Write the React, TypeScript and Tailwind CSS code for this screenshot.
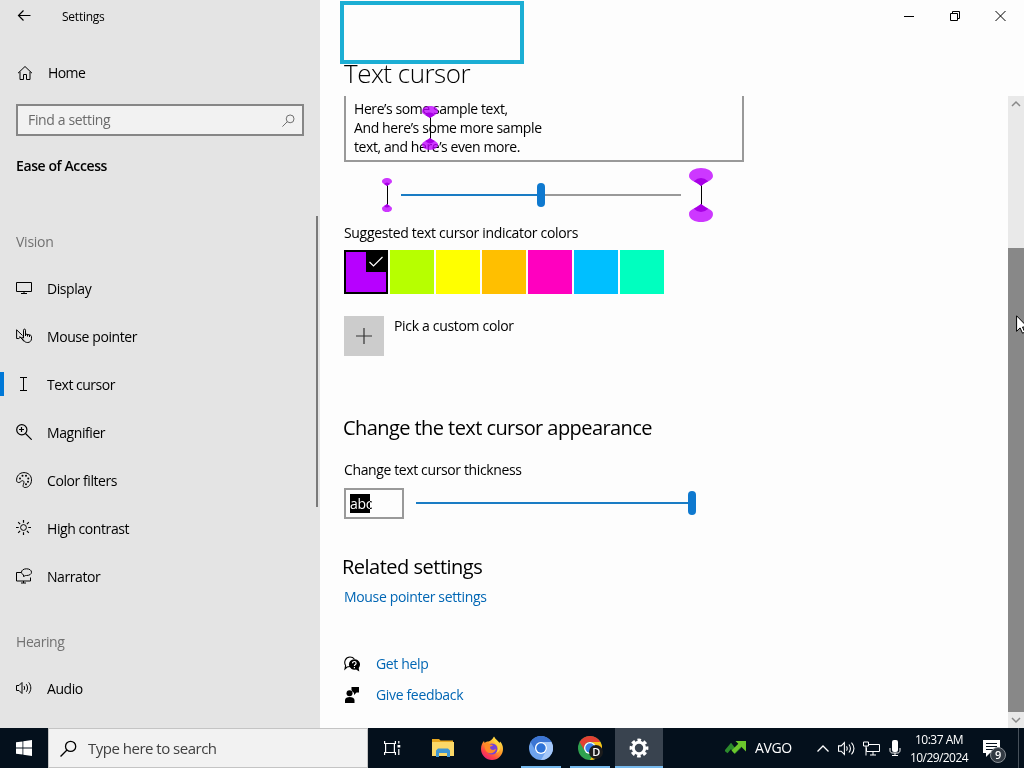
import type { ReactNode } from "react";
import clsx from "clsx";

type IconProps = { children: ReactNode; className?: string };

const LineIcon = ({ children, className }: IconProps) => (
  <svg
    viewBox="0 0 16 16"
    fill="none"
    stroke="currentColor"
    strokeWidth="1"
    className={clsx("shrink-0", className || "w-4 h-4")}
  >
    {children}
  </svg>
);

const HomeIcon = () => (
  <LineIcon>
    <path d="M1 8.2 8 1.5l7 6.7M3 6.7v7.8h3.5v-5h3v5H13V6.7" />
  </LineIcon>
);

const DisplayIcon = () => (
  <LineIcon>
    <path d="M.5 2.500h15v9H.5zM8 11.500v2M5 13.500h6" />
  </LineIcon>
);

const PointerIcon = () => (
  <LineIcon>
    <path d="M8 13.500 4.500 9 2.800 10.500H.6V1.800L6.500 7.500M3.500 8.500l4 4" />
    <path d="M7.500 10V2.200c0-1.500 2-1.500 2 0V6l4.500 1c1 .3 1.500.8 1.500 1.800v2c0 2-1.700 3.700-3.700 3.700-2 0-3-.6-4-2L5.500 10c.5-.9 1.300-.8 2 0M9.500 6v2M11.500 6.500v2M13.500 7v2" />
  </LineIcon>
);

const TextCursorIcon = () => (
  <LineIcon>
    <path d="M4 1.500h7M4 14.500h7M7.500 1.500v13" />
  </LineIcon>
);

const MagnifierIcon = () => (
  <LineIcon>
    <circle cx="5.800" cy="5.800" r="5.100" strokeWidth="1.200" />
    <path d="M9.500 9.500 15.700 15.700M3 5.500h5M5.500 3v5" strokeWidth="1.200" />
  </LineIcon>
);

const PaletteIcon = () => (
  <LineIcon>
    <path d="M.6 8.800C.3 4 3.500.6 8 .6c4.300 0 7.500 3 7.500 7.300 0 4.500-3 7.600-6.300 7.600-2.700 0-2.200-2-1.600-3.500.8-2 .2-3.300-1-3.300-1.600 0-2 1.800-3.800 1.800C1.600 10.500.7 9.800.6 8.800z" />
    <g fill="currentColor" stroke="none">
      <circle cx="4" cy="6.500" r="1" />
      <circle cx="6.500" cy="3.800" r="1" />
      <circle cx="10" cy="3.800" r="1" />
      <circle cx="12.300" cy="6.500" r="1" />
      <circle cx="12" cy="9.800" r="1" />
      <circle cx="10" cy="12.300" r="1" />
    </g>
  </LineIcon>
);

const ContrastIcon = () => (
  <LineIcon>
    <circle cx="7.500" cy="7.500" r="2.900" />
    <path d="M7.500 0v2.700M7.500 12.300V15M0 7.500h2.700M12.300 7.500H15M2.200 2.200l1.900 1.900M10.900 10.900l1.900 1.900M12.800 2.200l-1.900 1.900M4.100 10.900l-1.900 1.900" strokeWidth="1.200" />
  </LineIcon>
);

const NarratorIcon = () => (
  <LineIcon>
    <path d="M5 4.500H.5v8.500h14V9.500M7.500 13v2M5 15h5" />
    <path d="M7.500 8.500V6.800C6 6.200 5.500 5.300 5.500 4.200 5.500 2.200 7.600.8 10.500.8s5 1.400 5 3.400-2.100 3.300-5 3.300h-.8z" />
  </LineIcon>
);

const AudioIcon = ({ className }: { className?: string }) => (
  <LineIcon className={className}>
    <path d="M.5 5.500H3l3-3v11l-3-3H.5zM8 6c.8 1.200.8 2.800 0 4M10.300 4.200c1.700 2.300 1.700 5.300 0 7.600M12.700 2.400c2.800 3.400 2.800 7.800 0 11.200" />
  </LineIcon>
);

const SearchIcon = ({ className }: { className?: string }) => (
  <LineIcon className={className}>
    <circle cx="10" cy="6" r="4.800" strokeWidth="1.200" />
    <path d="M6.600 9.400.5 15.500" strokeWidth="1.200" />
  </LineIcon>
);

const visionItems = [
  { label: "Display", icon: <DisplayIcon /> },
  { label: "Mouse pointer", icon: <PointerIcon /> },
  { label: "Text cursor", icon: <TextCursorIcon />, active: true },
  { label: "Magnifier", icon: <MagnifierIcon /> },
  { label: "Color filters", icon: <PaletteIcon /> },
  { label: "High contrast", icon: <ContrastIcon /> },
  { label: "Narrator", icon: <NarratorIcon /> },
];

const swatches = [
  "bg-[#b7ff00]",
  "bg-[#ffff00]",
  "bg-[#ffbf00]",
  "bg-[#ff00bf]",
  "bg-[#00bfff]",
  "bg-[#00ffbf]",
];

function NavItem({ label, icon, active }: { label: string; icon: ReactNode; active?: boolean }) {
  return (
    <div className="flex items-center h-12">
      <div className={clsx("w-1 h-6 -mt-0.5", active && "bg-[#0078d7]")} />
      <div className="ml-3 -mt-0.5">{icon}</div>
      <span className={clsx("ml-[15px]", active && "tracking-[-0.5px]")}>{label}</span>
    </div>
  );
}

function Sidebar() {
  return (
    <aside className="relative w-80 shrink-0 bg-[#e4e4e4] overflow-hidden">
      <div className="flex items-center h-8 text-xs tracking-[-0.02em]">
        <LineIcon className="ml-4 w-4 h-4">
          <path d="M14.500 7.500H2.500M7.500 2.500l-5 5 5 5" strokeWidth="1.200" />
        </LineIcon>
        <span className="ml-[30px] mt-0.5">Settings</span>
      </div>
      <div className="flex items-center mt-[17px] ml-[17px] h-12">
        <HomeIcon />
        <span className="ml-[15px] tracking-[-0.6px]">Home</span>
      </div>
      <div className="flex justify-between items-center bg-[#f2f2f2] mt-[7px] ml-4 pr-[7px] pl-2.5 border-2 border-[#868686] w-72 h-8 text-[#6b6b6b]">
        <span className="-mt-px tracking-[-0.35px]">Find a setting</span>
        <SearchIcon className="w-[13px] h-[13px]" />
      </div>
      <h2 className="mt-5 ml-4 font-semibold leading-5 tracking-[-0.4px]">Ease of Access</h2>
      <h3 className="mt-14 ml-4 text-[#727272] leading-5 tracking-[-0.25px]">Vision</h3>
      <nav className="mt-[13px]">
        {visionItems.map((item) => (
          <NavItem key={item.label} label={item.label} icon={item.icon} active={item.active} />
        ))}
      </nav>
      <h3 className="mt-[31px] ml-4 text-[#727272] leading-5">Hearing</h3>
      <div className="mt-[13px]">
        <NavItem label="Audio" icon={<AudioIcon />} />
      </div>
      <div className="top-[216px] right-0.5 absolute bg-[#7a7a7a] w-0.5 h-[291px]" />
    </aside>
  );
}

function CursorMark({ className, width, height, lobe }: { className?: string; width: number; height: number; lobe: number }) {
  const c = width / 2;
  const top = `M0 ${lobe * 0.45}C0 ${-lobe * 0.15} ${width} ${-lobe * 0.15} ${width} ${lobe * 0.45}C${width} ${lobe * 0.7} ${width * 0.72} ${lobe * 0.75} ${c} ${lobe}C${width * 0.28} ${lobe * 0.75} 0 ${lobe * 0.7} 0 ${lobe * 0.45}Z`;
  const inner = `M${width * 0.2} ${lobe * 0.74}Q${c} ${lobe * 0.36} ${width * 0.8} ${lobe * 0.74}Q${width * 0.65} ${lobe * 0.84} ${c} ${lobe}Q${width * 0.35} ${lobe * 0.84} ${width * 0.2} ${lobe * 0.74}Z`;
  return (
    <svg width={width} height={height} viewBox={`0 0 ${width} ${height}`} className={className}>
      <path d={`M${c + 0.5} ${lobe - 2}V${height - lobe + 2}`} stroke="#000" />
      <g>
        <path d={top} fill="#bf00ff" opacity="0.78" />
        <path d={inner} fill="#a800e6" />
      </g>
      <g transform={`translate(0 ${height}) scale(1 -1)`}>
        <path d={top} fill="#bf00ff" opacity="0.78" />
        <path d={inner} fill="#a800e6" />
      </g>
    </svg>
  );
}

function WindowControls() {
  return (
    <div className="flex justify-end h-8">
      <div className="flex justify-center items-center w-[46px]">
        <svg width="10" height="10" stroke="#000" fill="none"><path d="M0 5.500h10" /></svg>
      </div>
      <div className="flex justify-center items-center w-[46px]">
        <svg width="10" height="10" stroke="#000" fill="none"><path d="M.5 2.500h7v7h-7zM2.500 2.500v-2h7v7h-2" /></svg>
      </div>
      <div className="flex justify-center items-center w-[46px]">
        <svg width="12" height="12" stroke="#000" fill="none"><path d="M.5 1l10 10M10.500 1l-10 10" /></svg>
      </div>
    </div>
  );
}

function SamplePreview() {
  return (
    <div className="relative pl-2 pt-[3px] border-[#999] border-2 border-t-0 w-[400px] h-[66px] leading-[19px] tracking-[-0.42px]">
      <p>Here’s some sample text,</p>
      <p className="tracking-[-0.38px]">And here’s some more sample</p>
      <p>text, and here’s even more.</p>
      <CursorMark className="top-[10px] left-[76px] absolute" width={16} height={44} lobe={12} />
    </div>
  );
}

function Content() {
  return (
    <main className="relative flex flex-col flex-1 bg-[#fdfdfd] tracking-[-0.34px]">
      <WindowControls />
      <h1 className="pl-6 h-16 text-black text-[26px] leading-[82px] font-light tracking-[-0.5px]">Text cursor</h1>
      <div className="top-px left-5 absolute bg-[#fdfdfd] border-[#1caed4] border-4 w-[184px] h-[63px]" />
      <div className="flex flex-1 justify-between">
        <div className="pl-6">
          <SamplePreview />
          <div className="flex items-center mt-[5px] ml-[38px] h-14">
            <CursorMark width={10} height={34} lobe={8} />
            <div className="flex items-center ml-[9px]">
              <div className="bg-[#1a7cc4] w-[136px] h-0.5" />
              <div className="bg-[#0f79cf] rounded-full w-2 h-6" />
              <div className="bg-[#999] w-[136px] h-0.5" />
            </div>
            <CursorMark className="ml-2" width={24} height={54} lobe={18} />
          </div>
          <p className="leading-5 tracking-[-0.32px]">Suggested text cursor indicator colors</p>
          <div className="flex gap-0.5 mt-[7px]">
            <div className="flex justify-end bg-[#b700ff] border-2 border-black w-11 h-11">
              <div className="bg-black w-5 h-5">
                <svg viewBox="0 0 20 20" className="w-5 h-5" fill="none" stroke="#fff" strokeWidth="1.200">
                  <path d="m3.500 10 4 4 9-9" />
                </svg>
              </div>
            </div>
            {swatches.map((color) => (
              <div key={color} className={clsx("w-11 h-11", color)} />
            ))}
          </div>
          <div className="flex mt-[22px]">
            <div className="flex justify-center items-center bg-[#ccc] w-10 h-10">
              <svg width="16" height="16" stroke="#333" strokeWidth="1.200"><path d="M0 8h16M8 0v16" /></svg>
            </div>
            <span className="ml-2.5 leading-5 tracking-[-0.32px]">Pick a custom color</span>
          </div>
          <h2 className="mt-[57px] text-xl leading-[30px] -ml-px tracking-[-0.57px]">Change the text cursor appearance</h2>
          <p className="mt-[17px] leading-5 tracking-[-0.38px]">Change text cursor thickness</p>
          <div className="flex items-start mt-2 h-[31px]">
            <div className="flex items-center pl-1 border-[#999] border-2 w-[60px] h-[31px]">
              <div className="relative leading-[19px]">
                <div className="top-0 left-0 absolute bg-black w-5 h-[19px]" />
                <span className="relative text-white mix-blend-difference">abc</span>
              </div>
            </div>
            <div className="bg-[#1a7cc4] mt-3.5 ml-3 w-[272px] h-0.5" />
            <div className="bg-[#0f79cf] mt-[3px] rounded-full w-2 h-6" />
          </div>
          <h2 className="mt-[33px] text-xl leading-[30px] -ml-0.5 tracking-[-0.5px]">Related settings</h2>
          <p className="mt-[5px] text-[#0066b4] leading-5">Mouse pointer settings</p>
          <div className="flex items-center mt-[47px] h-5">
            <svg viewBox="0 0 16 16" className="w-4 h-4">
              <path d="M6 10.500 3 11l-2 2 .6-3.500C-.5 6 1.500 1 6 1c2 0 3.500.8 4.300 2" fill="none" stroke="#000" strokeWidth="1.100" />
              <path d="M10.300 3.200a5.300 5.300 0 1 0 1.700 10.300l3.300 2-.6-3.600a5.300 5.300 0 0 0-4.400-8.700z" />
              <path d="M8.500 7.200c0-2.300 3.600-2.200 3.600 0 0 1.300-1.700 1.300-1.700 2.800M10.400 11v1.300" fill="none" stroke="#fff" strokeWidth="1.200" />
            </svg>
            <span className="ml-4 text-[#0066b4]">Get help</span>
          </div>
          <div className="flex items-center mt-[11px] h-5">
            <svg viewBox="0 0 16 16" className="w-4 h-4">
              <circle cx="5.500" cy="6.300" r="3" />
              <path d="M1 16v-3c0-4 9.500-4 9.500 0v3zM7.500 0H15v5.500h-2.500L10 8V5.500H9L7.500 3z" />
            </svg>
            <span className="ml-4 text-[#0066b4]">Give feedback</span>
          </div>
        </div>
        <div className="flex flex-col bg-[#e9e9e9] w-4 text-[#888]">
          <svg width="16" height="16" fill="none" stroke="currentColor" strokeWidth="1.500"><path d="m4 10 4-4 4 4" /></svg>
          <div className="mt-[136px] bg-[#888] h-[464px]" />
          <svg width="16" height="16" fill="none" stroke="currentColor" strokeWidth="1.500"><path d="m4 6 4 4 4-4" /></svg>
        </div>
      </div>
      <svg viewBox="0 0 12 19" className="top-[315px] left-[696px] absolute w-3 h-[19px]">
        <path d="M.6.8v15.500l3.500-3.400 2.400 5.300 2.300-1-2.300-5.200h5z" fill="#fff" stroke="#000" strokeWidth="1" />
      </svg>
    </main>
  );
}

const TaskViewIcon = () => (
  <svg viewBox="0 0 17 16" className="w-[17px] h-4" fill="none" stroke="#fff" strokeWidth="1.200">
    <path d="M.6 1v2.500h10.800V1M.6 15v-2.500h10.800V15M1.600 3.500v9M10.400 3.500v9M14.800 1v2.500M14.800 9v6" />
    <path d="M13.500 5h2.800v2.500h-2.800z" fill="#fff" stroke="none" />
  </svg>
);

const FolderIcon = () => (
  <svg viewBox="0 0 22 18" className="w-[22px] h-[18px]">
    <path d="M0 0h7l1.500 1.500H21V17H0z" fill="#e8a820" />
    <path d="M0 3h22v14H0z" fill="#fbd867" />
    <path d="M4 18v-6.500L6 9.500h10l2 2V18h-3v-4H7v4z" fill="#3f96d2" />
  </svg>
);

const FirefoxIcon = () => (
  <svg viewBox="0 0 24 24" className="w-6 h-6">
    <defs>
      <linearGradient id="fox" x1="0.800" y1="0.100" x2="0.200" y2="1">
        <stop offset="0" stopColor="#ffe34a" />
        <stop offset="0.450" stopColor="#ff9426" />
        <stop offset="0.750" stopColor="#ff4048" />
        <stop offset="1" stopColor="#e52080" />
      </linearGradient>
    </defs>
    <path d="M14 .5c1 3 4 3.500 5.500 6.500l.5-1.500c2 2 3 4.500 3 7.500a11 11 0 0 1-22 0c0-3.500 1.200-6 3-8l.7 2C6 5.500 7 5.500 8.500 5.500 10 5 12.500 3.500 14 .5z" fill="url(#fox)" />
    <circle cx="12" cy="13" r="5.500" fill="#7542d8" />
    <path d="M5 7c2-.5 4 0 5 1.500l3 .5c-.2 1.300-2.500 1.300-3 2 0 3 4 4 6 1.500-.5 5-7 6.500-10 2.500C4.500 12.500 4 9.500 5 7z" fill="#ff8a26" />
    <path d="M14 1c-1 3 0 5 2 7 3 3 2 7 0 9 4-1 5-5 4-8-1-3.500-4.500-4-6-8z" fill="#ffd43c" />
  </svg>
);

const ChromiumIcon = () => (
  <svg viewBox="0 0 24 24" className="w-6 h-6">
    <circle cx="12" cy="12" r="12" fill="#6da3ee" />
    <path d="M1.600 6A12 12 0 0 1 22.400 6H12a6 6 0 0 0-5.200 9z" fill="#3c75d3" />
    <path d="M22.400 6A12 12 0 0 1 12 24l5.200-9A6 6 0 0 0 12 6z" fill="#a5c8fa" />
    <circle cx="12" cy="12" r="6" fill="#fff" />
    <circle cx="12" cy="12" r="4.700" fill="#2f73d8" />
  </svg>
);

const ChromeIcon = () => (
  <svg viewBox="0 0 24 24" className="w-6 h-6">
    <circle cx="12" cy="12" r="12" fill="#2fa24f" />
    <path d="M1.600 6A12 12 0 0 1 22.400 6H12a6 6 0 0 0-5.200 9z" fill="#e34133" />
    <path d="M22.400 6A12 12 0 0 1 12 24l5.200-9A6 6 0 0 0 12 6z" fill="#fbc116" />
    <circle cx="12" cy="12" r="6" fill="#fff" />
    <circle cx="12" cy="12" r="4.700" fill="#3a7de8" />
  </svg>
);

const GearIcon = () => (
  <svg viewBox="0 0 20 20" className="w-5 h-5" fill="none" stroke="#fff">
    <circle cx="10" cy="10" r="5.700" strokeWidth="3" />
    <circle cx="10" cy="10" r="8" strokeWidth="2.800" strokeDasharray="3.640 2.643" strokeDashoffset="1.820" />
  </svg>
);

function TaskButton({ children, running, active }: { children: ReactNode; running?: boolean; active?: boolean }) {
  return (
    <div className={clsx("relative flex justify-center items-center w-12 h-10", active && "bg-[#39434f]")}>
      {children}
      {(running || active) && (
        <div className={clsx("bottom-0 absolute bg-[#76b9ed] h-0.5", active ? "w-12" : "w-10")} />
      )}
    </div>
  );
}

function Taskbar() {
  return (
    <footer className="flex bg-[#04101c] h-10 text-white">
      <div className="flex justify-center items-center w-12">
        <svg viewBox="0 0 16 16" className="w-4 h-4" fill="#fff">
          <path d="M0 2.300 6.500 1.400v6.200H0zM7.300 1.300 16 0v7.600H7.300zM0 8.400h6.500v6.200L0 13.700zM7.300 8.400H16V16l-8.700-1.300z" />
        </svg>
      </div>
      <div className="flex items-center bg-[#f2f2f2] pl-[11px] border border-[#c4c4c4] w-80 text-[#404040] text-[15px]">
        <SearchIcon className="w-[17px] h-[17px] text-black" />
        <span className="ml-[11px] mt-px tracking-[-0.5px]">Type here to search</span>
      </div>
      <TaskButton><TaskViewIcon /></TaskButton>
      <div className="flex gap-px ml-[3px]">
        <TaskButton><FolderIcon /></TaskButton>
        <TaskButton><FirefoxIcon /></TaskButton>
        <TaskButton running><ChromiumIcon /></TaskButton>
        <TaskButton running>
          <ChromeIcon />
          <span className="right-[11px] bottom-[9px] absolute flex justify-center items-center bg-[#1c1c1c] rounded-full w-[14px] h-[14px] font-semibold text-[11px]">D</span>
        </TaskButton>
        <TaskButton active><GearIcon /></TaskButton>
      </div>
      <div className="flex items-center ml-[62px]">
        <svg viewBox="0 0 22 14" className="w-[22px] h-[14px]">
          <path d="m1 11 5-6 4 5 5-5" fill="none" stroke="#2c8a2c" strokeWidth="4" />
          <path d="m8 11 8-8" fill="none" stroke="#6cc72c" strokeWidth="4" />
          <path d="M10.500 0H21v10.500z" fill="#6cc72c" />
        </svg>
        <span className="ml-2 w-[37px] text-[14px] tracking-[-0.4px]">AVGO</span>
        <svg width="12" height="7" fill="none" stroke="#fff" strokeWidth="1.300" className="ml-[25px]"><path d="m.5 6.500 5.500-5.500 5.500 5.500" /></svg>
        <AudioIcon className="ml-[9px] w-[17px] h-[17px]" />
        <svg viewBox="0 0 17 15" className="ml-2 w-[17px] h-[15px]" fill="none" stroke="#fff">
          <path d="M5.500 3.500h11v7h-13V6.500M10 10.500v3.500M7 14h6M.5 1h5v4h-5zM3 5v9.500" />
        </svg>
        <svg viewBox="0 0 12 16" className="ml-[9px] w-3 h-4">
          <rect x="3" y="0" width="6" height="12" rx="2" fill="#fff" />
          <path d="M1 8v2.500c0 1.500 1 2.500 2.500 2.500h5c1.500 0 2.500-1 2.500-2.500V8M6 13v2.500M3 15.500h6" fill="none" stroke="#fff" />
        </svg>
      </div>
      <div className="flex flex-col justify-center items-center w-[76px] pt-px text-xs leading-[18px]">
        <span className="tracking-[-0.5px]">10:37 AM</span>
        <span className="tracking-[-0.58px]">10/29/2024</span>
      </div>
      <div className="relative w-[46px]">
        <svg viewBox="0 0 18 17" className="top-3 left-[6px] absolute w-[18px] h-[17px]">
          <path d="M0 0h17v13H7l-4 4v-4H0z" fill="#fff" />
          <path d="M3 3.500h11M3 6.500h11M3 9.500h7" stroke="#04101c" />
        </svg>
        <span className="top-[19px] left-[13px] absolute flex justify-center items-center bg-[#333b44] border border-[#8a9096] rounded-full w-4 h-4 font-semibold text-[11px]">9</span>
        <div className="right-1 absolute bg-[#46505a] w-px h-10" />
      </div>
    </footer>
  );
}

export default function App() {
  return (
    <div className="flex flex-col w-[1024px] h-[768px] overflow-hidden font-['Open_Sans','Noto_Sans',sans-serif] text-black text-sm tracking-[-0.42px]">
      <div className="flex flex-1 min-h-0">
        <Sidebar />
        <Content />
      </div>
      <Taskbar />
    </div>
  );
}
